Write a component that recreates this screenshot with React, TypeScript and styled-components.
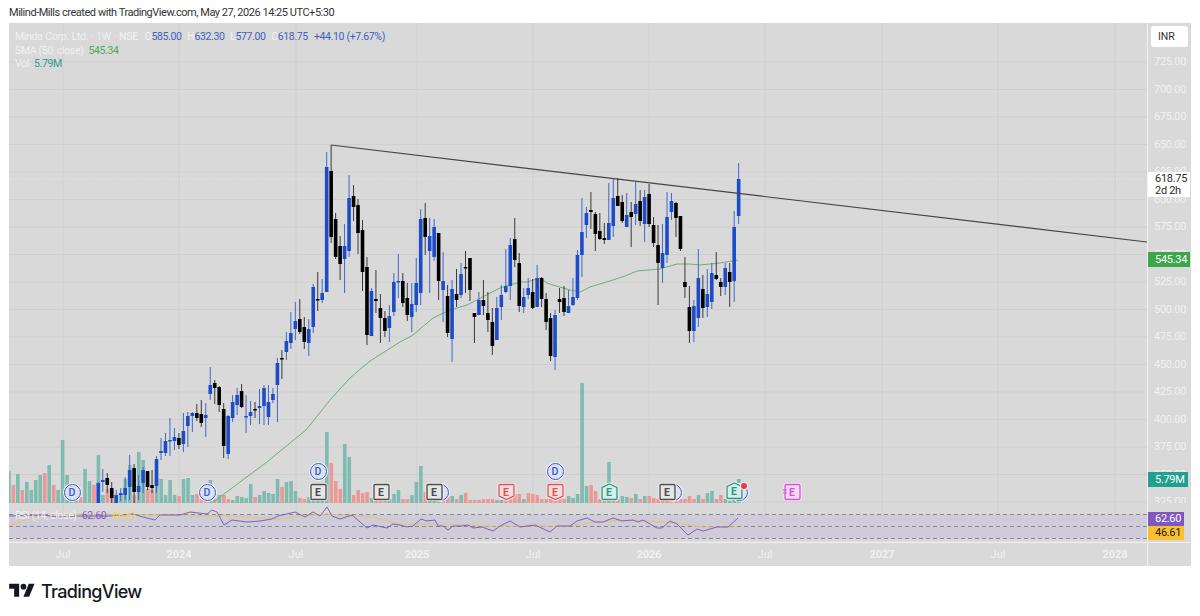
import React from 'react';
import styled, { createGlobalStyle } from 'styled-components';

// [high, bodyTop, bodyBottom, low, up] in screenshot pixels, one per week
const candles: [number, number, number, number, number][] = [
  [482,483,503,503,1],[469,480,482,492,1],[473,478,485,493,0],[482,488,498,503,0],[490,495,503,503,1],
  [488,493,495,501,1],[477,488,495,500,1],[455,470,487,500,1],[464,468,492,503,0],[475,486,492,500,1],
  [467,470,483,493,1],[471,471,487,490,0],[470,485,488,493,0],[456,459,486,493,1],[438,451,453,460,1],
  [433,441,453,456,1],[418,440,441,456,1],[428,437,441,450,1],[433,438,445,449,0],[413,431,444,452,1],
  [412,416,426,447,1],[412,413,416,432,1],[404,413,418,421,0],[400,414,423,427,0],[403,415,418,437,1],
  [367,385,394,400,1],[380,383,388,404,0],[386,387,405,412,0],[403,409,446,458,0],[415,416,454,459,1],
  [395,402,418,422,1],[388,395,405,415,1],[384,391,407,408,0],[395,416,417,433,1],[401,412,416,425,1],
  [402,409,410,418,0],[389,406,408,424,1],[385,388,406,425,1],[385,402,417,425,1],[388,394,400,403,1],
  [358,363,385,422,1],[350,358,359,379,0],[332,341,352,360,1],[312,333,343,349,1],[302,321,329,340,1],
  [299,319,332,334,0],[317,327,342,349,0],[319,329,343,356,1],[284,287,327,333,1],[272,299,300,311,0],
  [279,293,300,303,1],[152,167,292,292,1],[145,171,237,243,0],[213,219,257,259,0],[236,246,264,280,0],
  [224,246,259,293,1],[175,198,251,257,1],[185,196,207,221,0],[199,205,233,254,0],[220,230,272,291,0],
  [257,267,335,345,0],[288,291,336,336,1],[270,299,301,313,0],[294,308,318,343,0],[311,318,331,337,0],
  [305,316,328,342,1],[273,282,312,316,1],[254,281,282,298,1],[273,281,303,307,0],[283,298,315,321,0],
  [283,304,317,332,1],[258,283,305,312,1],[209,219,293,305,1],[203,218,237,255,0],[218,236,251,293,1],
  [219,227,257,261,1],[233,233,281,300,0],[252,281,290,322,1],[285,296,333,337,0],[280,289,339,362,1],
  [269,294,300,307,0],[263,274,295,298,1],[251,267,268,293,0],[258,258,290,301,0],[313,313,317,343,0],
  [292,300,315,315,1],[280,300,306,315,0],[292,313,320,332,0],[308,322,346,355,0],[297,308,340,340,1],
  [285,295,307,320,1],[249,286,292,293,1],[238,245,286,300,1],[218,239,260,267,0],[253,263,306,312,0],
  [288,297,307,313,1],[278,288,295,299,1],[279,292,308,309,0],[265,278,307,307,1],[277,278,299,307,0],
  [293,299,322,330,0],[313,318,356,361,0],[310,315,357,370,1],[288,299,302,313,0],[286,298,312,316,0],
  [290,306,313,313,1],[278,297,305,306,1],[250,255,298,300,1],[198,232,255,277,1],[207,213,225,238,1],
  [192,210,212,229,0],[212,214,234,251,0],[213,231,239,240,0],[223,238,240,244,0],[183,223,240,240,1],
  [178,198,226,237,1],[178,196,206,206,0],[195,202,221,223,0],[193,215,227,227,1],[202,212,217,247,0],
  [182,204,214,225,1],[190,201,221,226,0],[190,197,224,242,1],[184,194,224,227,0],[217,225,243,247,0],
  [225,245,263,305,0],[224,253,268,283,1],[192,217,255,263,1],[193,201,212,220,1],[202,203,218,237,0],
  [216,216,249,251,0],[257,282,287,298,0],[286,307,331,343,0],[300,306,331,342,1],[249,278,318,327,1],
  [275,289,308,318,0],[269,294,307,317,1],[263,273,302,309,1],[252,275,279,280,0],[278,282,287,296,0],
  [263,268,287,295,1],[263,272,282,307,0],[211,227,281,302,1],[163,179,216,224,1],
];

// weekly volume in pixels, negative for a down week
const volumes = [
  32,-18,29,-13,21,13,23,28,-30,38,-18,13,63,28,16,12,-6,34,22,-18,48,8,-14,-12,8,9,24,38,-8,51,
  43,-14,-13,26,24,8,23,8,-7,24,25,8,-9,-4,-8,23,-4,8,-8,-4,3,7,6,5,19,-6,8,12,10,9,
  24,-16,21,22,12,-5,-4,6,8,10,12,71,-40,-22,-14,59,46,-8,-13,-10,-11,5,-4,-4,-3,4,9,13,-4,-4,
  8,21,37,-11,4,4,4,-4,-6,7,-4,8,-10,-3,-3,-3,-4,-4,-4,3,3,-4,-6,-9,-9,4,-10,-9,-8,-4,-4,-4,
  -6,-6,-4,7,5,9,120,17,-18,-12,-4,-4,41,-4,-4,7,6,-5,9,-4,7,-7,-5,-4,-11,-9,-4,-4,-4,-4,
  -7,-4,8,-4,10,12,-4,-8,4,2,6,24,
];

const smaLine =
  '212,503 240,482 267,462 290,443 306,430 330,400 350,378 370,361 400,342 413,335 433,318 450,310 467,305 500,288 520,282 527,282 540,278 547,283 553,285 570,290 580,292 590,287 613,280 625,276 637,271 660,269 677,264 690,264 700,265 720,263 738,260';

const rsiLine =
  '9,517 43,516 57,518 77,517 110,517 133,515 143,518 155,521 160,516 180,516 190,513 207,515 212,511 217,513 224,526 232,521 247,523 260,522 272,520 278,517 295,513 305,518 313,513 320,517 327,508 332,517 340,520 352,516 367,529 373,526 387,529 393,525 400,526 407,528 413,527 421,520 427,522 435,521 438,527 443,527 448,531 453,527 462,527 468,526 473,529 482,528 493,532 500,527 510,522 520,528 535,526 550,533 557,527 570,527 577,522 587,519 595,523 603,523 613,519 622,522 633,521 638,523 643,521 657,529 662,529 670,522 677,525 688,536 697,530 703,532 717,528 728,528 738,519';

const rsiAverage =
  '9,527 33,518 67,515 117,516 167,516 220,517 250,518 277,520 300,517 327,515 350,517 373,518 400,525 420,525 450,525 483,527 517,527 567,527 600,523 620,521 650,522 677,524 700,528 738,528';

const prices = [725, 700, 675, 650, 625, 600, 575, 550, 525, 500, 475, 450, 425, 400, 375, 350, 325];
const gridX = [63, 179, 296, 417, 533, 649, 765, 882, 998, 1115];
const gridY = prices.map(p => 62 + (725 - p) * 1.1);

const timeLabels = [
  { text: 'Jul', w: 108 },
  { text: '2024', w: 124, year: true },
  { text: 'Jul', w: 110 },
  { text: '2025', w: 132, year: true },
  { text: 'Jul', w: 100 },
  { text: '2026', w: 132, year: true },
  { text: 'Jul', w: 100 },
  { text: '2027', w: 134, year: true },
  { text: 'Jul', w: 98 },
  { text: '2028', w: 136, year: true },
];

type BadgeKind = 'dark' | 'earnRed' | 'earnGreen' | 'future';

const badgeShapes: Record<BadgeKind, { d: string; stroke: string; fill: string; color: string }> = {
  dark: { d: 'M2 1.5h13a1 1 0 0 1 1 1v13a1 1 0 0 1-1 1H2a1 1 0 0 1-1-1v-13a1 1 0 0 1 1-1z', stroke: '#4a4a4a', fill: '#e6e6e6', color: '#4a4a4a' },
  earnRed: { d: 'M2 1.5h13a1 1 0 0 1 1 1v10.5l-7.5 3.5L1 13V2.5a1 1 0 0 1 1-1z', stroke: '#e5505a', fill: '#f1dedf', color: '#e5505a' },
  earnGreen: { d: 'M8.5 1L16 4.5V15.5a1 1 0 0 1-1 1H2a1 1 0 0 1-1-1V4.5z', stroke: '#1f9b85', fill: '#dcebe8', color: '#1f9b85' },
  future: { d: 'M2 1.5h13a1 1 0 0 1 1 1v13a1 1 0 0 1-1 1H2a1 1 0 0 1-1-1v-13a1 1 0 0 1 1-1z', stroke: '#e14be0', fill: '#efdcef', color: '#e14be0' },
};

const EventBadge: React.FC<{ kind: BadgeKind; x: number; y: number }> = ({ kind, x, y }) => {
  const shape = badgeShapes[kind];
  return (
    <Badge $x={x} $y={y}>
      <svg width="17" height="18" viewBox="0 0 17 18">
        <path d={shape.d} fill="none" stroke="#f4f4f4" strokeWidth="3" />
        <path d={shape.d} fill={shape.fill} stroke={shape.stroke} strokeWidth="1.3" />
        {kind === 'future' && <path d="M-1 7h4M-1 10h4" stroke={shape.stroke} strokeWidth="1" />}
      </svg>
      <BadgeLetter $color={shape.color}>E</BadgeLetter>
    </Badge>
  );
};

const App: React.FC = () => (
  <Page>
    <GlobalStyle />
    <Caption>Milind-Mills created with TradingView.com, May 27, 2026 14:25 UTC+5:30</Caption>
    <ChartFrame>
      <MainPane>
        <svg width="1138" height="480" viewBox="9 23 1138 480">
          {gridX.map(x => <line key={x} x1={x} x2={x} y1={23} y2={503} stroke="#cfcfcf" />)}
          {gridY.map(y => <line key={y} x1={9} x2={1147} y1={y} y2={y} stroke="#cfcfcf" />)}
          {volumes.map((v, j) => (
            <rect
              key={j}
              x={8.9 + j * 4.478 - 1.8}
              y={503 - Math.abs(v)}
              width={3.6}
              height={Math.abs(v)}
              fill={v > 0 ? '#7fbbb0' : '#e99a98'}
            />
          ))}
          <line x1={9} x2={1147} y1={179} y2={179} stroke="#e6e6e6" strokeDasharray="1 2" />
          <polyline points={smaLine} fill="none" stroke="#6fae74" strokeWidth="1" strokeLinejoin="round" />
          {candles.map(([high, top, bottom, low, up], i) => {
            const x = 98.3 + i * 4.478;
            return (
              <g key={i}>
                <line x1={x} x2={x} y1={high} y2={low} stroke={up ? '#4069cc' : '#3a3a3a'} strokeWidth="1" />
                <rect x={x - 1.8} y={top} width={3.6} height={Math.max(bottom - top, 1.5)} fill={up ? '#1c4cc8' : '#000000'} />
              </g>
            );
          })}
          <line x1={331} y1={145} x2={1147} y2={242} stroke="#444444" strokeWidth="1.2" />
        </svg>
        <Legend>
          <LegendRow>
            <SymbolName>Minda Corp. Ltd. · 1W · NSE</SymbolName>
            <LegendKey>O</LegendKey><LegendValue $color="#3f5fc0">585.00</LegendValue>
            <LegendKey>H</LegendKey><LegendValue $color="#3f5fc0">632.30</LegendValue>
            <LegendKey>L</LegendKey><LegendValue $color="#3f5fc0">577.00</LegendValue>
            <LegendKey>C</LegendKey><LegendValue $color="#3f5fc0">618.75</LegendValue>
            <LegendValue $color="#3f5fc0">+44.10 (+7.67%)</LegendValue>
          </LegendRow>
          <LegendRow>
            <LegendName>SMA (50, close)</LegendName>
            <LegendValue $color="#4fa85a">545.34</LegendValue>
          </LegendRow>
          <LegendRow>
            <LegendName>Vol</LegendName>
            <LegendValue $color="#2a9d8f">5.79M</LegendValue>
          </LegendRow>
        </Legend>
        <DividendMark $x={72} $y={492}>D</DividendMark>
        <DividendMark $x={207} $y={492}>D</DividendMark>
        <DividendMark $x={318} $y={471}>D</DividendMark>
        <DividendMark $x={440} $y={492}>D</DividendMark>
        <DividendMark $x={555} $y={471}>D</DividendMark>
        <DividendMark $x={673} $y={492}>D</DividendMark>
        <DividendMark $x={739} $y={492}>D</DividendMark>
        <EventBadge kind="dark" x={318} y={492} />
        <EventBadge kind="dark" x={381} y={492} />
        <EventBadge kind="dark" x={434} y={492} />
        <EventBadge kind="earnRed" x={506} y={492} />
        <EventBadge kind="earnRed" x={555} y={492} />
        <EventBadge kind="earnGreen" x={609} y={492} />
        <EventBadge kind="dark" x={667} y={492} />
        <EventBadge kind="earnGreen" x={734} y={491} />
        <EventBadge kind="future" x={792} y={492} />
        <RedDot />
      </MainPane>
      <PriceAxis>
        {prices.map(p => <PriceTick key={p}>{p.toFixed(2)}</PriceTick>)}
        <CurrencyButton>INR</CurrencyButton>
        <LastPriceTag>
          <span>618.75</span>
          <span>2d 2h</span>
        </LastPriceTag>
        <AxisTag $top={229} $w={42} $bg="#3ba64a" $fg="#ffffff">545.34</AxisTag>
        <AxisTag $top={449} $w={40} $bg="#22a08f" $fg="#ffffff">5.79M</AxisTag>
      </PriceAxis>
      <RsiPane>
        <svg width="1138" height="39" viewBox="9 504 1138 39">
          {gridX.map(x => <line key={x} x1={x} x2={x} y1={504} y2={543} stroke="#cfcfcf" />)}
          <rect x={9} y={515.5} width={1138} height={24} fill="#cfcbd8" />
          {[515.5, 527.5, 539.5].map(y => (
            <line key={y} x1={9} x2={1147} y1={y} y2={y} stroke="#8b8695" strokeDasharray="4 3" />
          ))}
          <polyline points={rsiAverage} fill="none" stroke="#e3c568" strokeWidth="1" />
          <polyline points={rsiLine} fill="none" stroke="#7e60bd" strokeWidth="1" strokeLinejoin="round" />
        </svg>
        <RsiLegend>
          <LegendName>RSI (14, close)</LegendName>
          <LegendValue $color="#7e57c2">62.60</LegendValue>
          <LegendValue $color="#f5d94e">46.61</LegendValue>
        </RsiLegend>
      </RsiPane>
      <RsiAxis>
        <RsiTag $bg="#7e57c2" $fg="#ffffff">62.60</RsiTag>
        <RsiTag $bg="#fbc02d" $fg="#222222">46.61</RsiTag>
      </RsiAxis>
      <TimeAxis>
        {timeLabels.map((t, i) => <TimeLabel key={i} $w={t.w} $year={t.year}>{t.text}</TimeLabel>)}
      </TimeAxis>
      <AxisCorner />
    </ChartFrame>
    <Footer>
      <svg width="26" height="20" viewBox="0 0 36 28">
        <path d="M14 22H7V11H0V4h14v18zM28 22h-8l7.5-18h8L28 22z" fill="#131722" />
        <circle cx="20" cy="8" r="4" fill="#131722" />
      </svg>
      <Wordmark>TradingView</Wordmark>
    </Footer>
  </Page>
);

const GlobalStyle = createGlobalStyle`
  html, body {
    margin: 0;
    padding: 0;
    background: #ffffff;
  }
  body {
    font-family: Roboto, "Liberation Sans", sans-serif;
  }
`;

const Page = styled.div`
  width: 1200px;
  height: 616px;
  padding-left: 9px;
  box-sizing: border-box;
  overflow: hidden;
  background: #ffffff;
`;

const Caption = styled.div`
  height: 23px;
  line-height: 26px;
  font-size: 11px;
  letter-spacing: -0.46px;
  color: #333333;
  white-space: nowrap;
`;

const ChartFrame = styled.div`
  display: grid;
  grid-template-columns: 1138px 44px;
  grid-template-rows: 480px 40px 23px;
  width: 1182px;
  background: #d9d9d9;
`;

const MainPane = styled.div`
  position: relative;
  overflow: hidden;

  svg {
    display: block;
  }
`;

const Legend = styled.div`
  position: absolute;
  left: 6px;
  top: 7px;
`;

const LegendRow = styled.div`
  display: flex;
  height: 13.6px;
  line-height: 13.6px;
  font-size: 10.5px;
  letter-spacing: -0.35px;
  white-space: nowrap;
`;

const LegendName = styled.span`
  color: #f1f1f1;
  margin-right: 5px;
`;

const SymbolName = styled.span`
  flex: 0 0 124px;
  color: #f1f1f1;
  word-spacing: 0.7px;
`;

const LegendKey = styled.span`
  color: #f1f1f1;
  margin-left: 5.6px;
`;

const LegendValue = styled.span<{ $color: string }>`
  color: ${p => p.$color};

  & + & {
    margin-left: 6px;
  }
`;

const DividendMark = styled.div<{ $x: number; $y: number }>`
  position: absolute;
  left: ${p => p.$x - 9 - 8.5}px;
  top: ${p => p.$y - 23 - 8.5}px;
  width: 17px;
  height: 17px;
  box-sizing: border-box;
  display: flex;
  align-items: center;
  justify-content: center;
  border: 1.4px solid #2f5bd6;
  border-radius: 50%;
  box-shadow: 0 0 0 1px #f3f3f3;
  background: #dfe2ec;
  color: #2f5bd6;
  font-size: 10.5px;
  font-weight: 500;
`;

const Badge = styled.div<{ $x: number; $y: number }>`
  position: absolute;
  left: ${p => p.$x - 9 - 8.5}px;
  top: ${p => p.$y - 23 - 9}px;
  width: 17px;
  height: 18px;
  display: flex;
  align-items: center;
  justify-content: center;

  svg {
    position: absolute;
    left: 0;
    top: 0;
    overflow: visible;
  }
`;

const BadgeLetter = styled.span<{ $color: string }>`
  position: relative;
  color: ${p => p.$color};
  font-size: 10.5px;
  font-weight: 700;
`;

const RedDot = styled.div`
  position: absolute;
  left: ${744 - 9 - 3}px;
  top: ${486 - 23 - 3}px;
  width: 6px;
  height: 6px;
  border-radius: 50%;
  background: #f23645;
  box-shadow: 0 0 0 1px #efefef;
`;

const PriceAxis = styled.div`
  position: relative;
  overflow: hidden;
  box-sizing: border-box;
  padding-top: 25px;
  border-left: 1px solid #f2f2f2;
`;

const PriceTick = styled.div`
  height: 27.5px;
  line-height: 27.5px;
  padding-left: 6px;
  font-size: 11px;
  letter-spacing: -0.3px;
  color: #f1f1f1;
`;

const CurrencyButton = styled.div`
  position: absolute;
  left: 3px;
  top: 3px;
  width: 37px;
  height: 21px;
  line-height: 21px;
  padding-left: 7px;
  box-sizing: border-box;
  border-radius: 3px;
  background: #ffffff;
  color: #333333;
  font-size: 10.5px;
`;

const LastPriceTag = styled.div`
  position: absolute;
  left: 0;
  top: 149px;
  width: 42px;
  height: 25px;
  padding-left: 7px;
  box-sizing: border-box;
  display: flex;
  flex-direction: column;
  justify-content: center;
  background: #ffffff;
  color: #2b2b2b;
  font-size: 11px;
  letter-spacing: -0.3px;
  line-height: 12px;
`;

const AxisTag = styled.div<{ $top: number; $w: number; $bg: string; $fg: string }>`
  position: absolute;
  left: 0;
  top: ${p => p.$top}px;
  width: ${p => p.$w}px;
  height: 15px;
  line-height: 15px;
  padding-left: 7px;
  box-sizing: border-box;
  background: ${p => p.$bg};
  color: ${p => p.$fg};
  font-size: 11px;
  letter-spacing: -0.3px;
`;

const RsiPane = styled.div`
  position: relative;
  overflow: hidden;
  border-bottom: 1px solid #f2f2f2;

  svg {
    display: block;
  }
`;

const RsiLegend = styled.div`
  position: absolute;
  left: 6px;
  top: 6px;
  display: flex;
  font-size: 10.5px;
  letter-spacing: -0.35px;
  line-height: 13px;
  white-space: nowrap;
`;

const RsiAxis = styled.div`
  box-sizing: border-box;
  padding-top: 9px;
  border-left: 1px solid #f2f2f2;
  border-bottom: 1px solid #f2f2f2;
`;

const RsiTag = styled.div<{ $bg: string; $fg: string }>`
  width: 36px;
  height: 14px;
  line-height: 14px;
  padding-left: 7px;
  box-sizing: border-box;
  background: ${p => p.$bg};
  color: ${p => p.$fg};
  font-size: 11px;
  letter-spacing: -0.3px;
`;

const TimeAxis = styled.div`
  display: flex;
  overflow: hidden;
`;

const TimeLabel = styled.div<{ $w: number; $year?: boolean }>`
  flex: 0 0 ${p => p.$w}px;
  text-align: center;
  line-height: 23px;
  font-size: 11px;
  font-weight: ${p => (p.$year ? 700 : 400)};
  color: #f1f1f1;
`;

const AxisCorner = styled.div`
  border-left: 1px solid #f2f2f2;
`;

const Footer = styled.div`
  display: flex;
  align-items: center;
  gap: 6px;
  height: 50px;
`;

const Wordmark = styled.span`
  font-family: Inter, Roboto, sans-serif;
  font-size: 18px;
  font-weight: 500;
  letter-spacing: -0.67px;
  color: #131722;
`;

export default App;
